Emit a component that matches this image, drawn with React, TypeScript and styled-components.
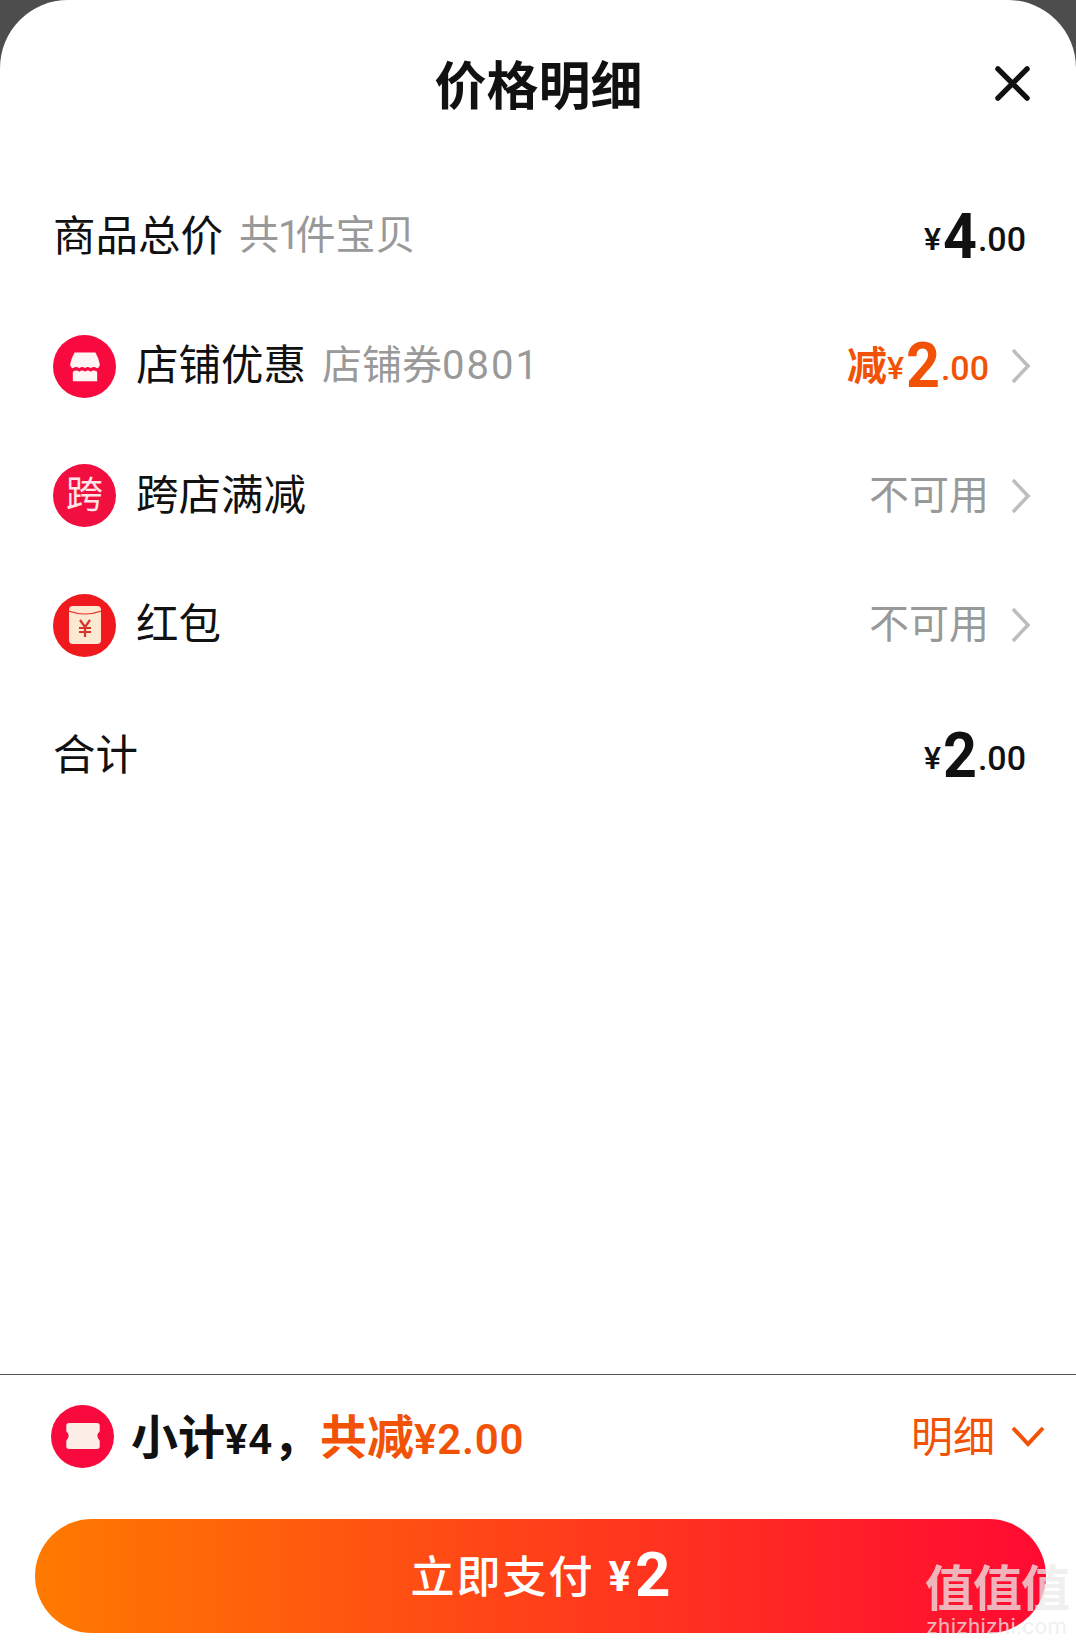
import React from 'react'
import styled, { createGlobalStyle } from 'styled-components'

const FONT = `Roboto, "Noto Sans CJK SC", sans-serif`
const ORANGE = '#f25206'
const INK = '#111111'
const GREY = '#999999'

const GlobalStyle = createGlobalStyle`
  html, body {
    margin: 0;
    padding: 0;
    background: #4d4d4d;
    font-family: ${FONT};
  }
`

const Sheet = styled.div`
  position: relative;
  width: 1076px;
  height: 1645px;
  display: flex;
  flex-direction: column;
  background: #fff;
  border-radius: 68px 68px 0 0;
  overflow: hidden;
`
const Header = styled.div`
  height: 172px;
  flex: none;
  display: grid;
  grid-template-columns: 1fr auto 1fr;
  padding: 0 46px 0 47px;
  box-sizing: border-box;
  align-items: start;
`
const Title = styled.div`
  grid-column: 2;
  font-size: 52px;
  line-height: 60px;
  margin-top: 58px;
  font-weight: 700;
  color: ${INK};
`
const CloseIcon = styled.svg`
  grid-column: 3;
  justify-self: end;
  width: 35px;
  height: 35px;
  margin-top: 66px;
`
const List = styled.div`
  flex: 1;
  display: flex;
  flex-direction: column;
  padding: 0 45px 0 53px;
`
const Row = styled.div`
  height: 129.5px;
  display: flex;
  align-items: center;
`
const TotalRow = styled(Row)`
  margin-top: 1px;
`
const Label = styled.span<{ $indent?: boolean }>`
  font-size: 42.5px;
  color: ${INK};
  margin-left: ${(p) => (p.$indent ? '20px' : '0')};
  margin-bottom: 9px;
  white-space: nowrap;
`
const Sub = styled.span`
  font-size: 40px;
  color: ${GREY};
  margin-left: 16px;
  margin-bottom: 9px;
  white-space: nowrap;
`
const NarrowOne = styled.span`
  letter-spacing: -5px;
  margin-left: -1px;
`
const Code = styled.span`
  letter-spacing: 2px;
`
const Right = styled.div`
  margin-left: auto;
  display: flex;
  align-items: center;
`
const Price = styled.div<{ $color: string; $trim?: boolean }>`
  display: flex;
  align-items: center;
  color: ${(p) => p.$color};
  margin-right: ${(p) => (p.$trim ? '5px' : '0')};
  white-space: nowrap;
`
const Prefix = styled.span`
  font-size: 40px;
  font-weight: 700;
  margin-bottom: 6px;
`
const Yen = styled.span`
  font-size: 32px;
  font-weight: 500;
  margin-top: 4px;
  margin-right: 1px;
`
const BigNum = styled.span`
  font-size: 63px;
  font-weight: 700;
  line-height: 70px;
  display: inline-block;
  width: 33px;
  text-align: center;
  transform: scaleX(0.94);
`
const Cents = styled.span`
  font-size: 34px;
  font-weight: 500;
  margin-left: 3px;
  margin-top: 4px;
`
const Unavailable = styled.span`
  font-size: 40px;
  color: ${GREY};
  margin-bottom: 8px;
`
const Arrow = styled.svg`
  width: 20px;
  height: 36px;
  margin-left: 22px;
`
const Badge = styled.div<{ $bg: string }>`
  width: 63px;
  height: 63px;
  flex: none;
  border-radius: 50%;
  background: ${(p) => p.$bg};
  display: flex;
  align-items: center;
  justify-content: center;
  color: #ffe3e6;
  font-size: 37px;
  line-height: 63px;
`
const Footer = styled.div`
  flex: none;
  height: 271px;
  box-sizing: border-box;
  border-top: 1px solid #555;
  padding: 0 30px 12px 35px;
  display: flex;
  flex-direction: column;
`
const Summary = styled.div`
  height: 122px;
  padding: 0 1px 0 16px;
  display: flex;
  align-items: center;
  flex: none;
`
const Subtotal = styled.span<{ $color: string; $gap: string }>`
  font-size: 47px;
  font-weight: 700;
  color: ${(p) => p.$color};
  margin-left: ${(p) => p.$gap};
  margin-bottom: 5px;
  white-space: nowrap;
`
const Figures = styled.span`
  font-size: 42px;
  font-weight: 600;
  letter-spacing: 0.8px;
`
const Detail = styled.span`
  margin-left: auto;
  margin-bottom: 5px;
  font-size: 42px;
  color: ${ORANGE};
`
const Caret = styled.svg`
  width: 34px;
  height: 22px;
  margin-left: 16px;
`
const PayButton = styled.div`
  height: 115px;
  width: 1011px;
  margin-top: 22px;
  border-radius: 58px;
  background: linear-gradient(90deg, #ff7a00 0%, #ff3a1c 55%, #ff0a32 100%);
  color: #fff;
  display: flex;
  align-items: center;
  justify-content: center;
  box-sizing: border-box;
`
const PayLabel = styled.span`
  font-size: 44px;
  font-weight: 500;
  letter-spacing: 2px;
  margin-bottom: 4px;
`
const PayYen = styled.span`
  font-size: 42px;
  font-weight: 700;
  margin-left: 14px;
`
const PayNum = styled.span`
  font-size: 62px;
  font-weight: 700;
  margin-left: 4px;
  margin-bottom: 4px;
`
const Watermark = styled.div`
  position: absolute;
  right: 6px;
  bottom: 7px;
  width: 146px;
  display: flex;
  flex-direction: column;
  align-items: center;
  color: rgba(235, 235, 235, 0.75);
  pointer-events: none;
`
const MarkGlyphs = styled.div`
  font-size: 49px;
  line-height: 52px;
  font-weight: 700;
  letter-spacing: -1px;
  white-space: nowrap;
`
const MarkUrl = styled.div`
  font-size: 22px;
  line-height: 22px;
  letter-spacing: 0.5px;
  white-space: nowrap;
`

const Chevron = () => (
  <Arrow viewBox="0 0 20 36">
    <path d="M2 2 L17 18 L2 34" fill="none" stroke="#bdbdbd" strokeWidth="3.5" />
  </Arrow>
)

const ShopIcon = () => (
  <svg width="34" height="33" viewBox="0 0 38 38">
    <path d="M7 3 H31 Q35 10 36 16 Q36 20 33 21 Q29 18 25.5 21 Q22 18 19 21 Q16 18 12.5 21 Q9 18 5 21 Q2 20 2 16 Q3 10 7 3 Z" fill="#fff5f5" />
    <path d="M5 25 Q9 22 12.5 25 Q16 22 19 25 Q22 22 25.5 25 Q29 22 33 25 V36 H5 Z" fill="#fff5f5" />
  </svg>
)

const PacketIcon = () => (
  <svg width="32" height="38" viewBox="0 0 32 38">
    <rect x="0" y="0" width="32" height="38" rx="4" fill="#fde8d2" />
    <path d="M0 5 Q16 11 32 5" fill="none" stroke="#e2382e" strokeWidth="1.2" />
    <path d="M11 14 L16 21 L21 14 M10 22 H22 M10 26 H22 M16 21 V31" fill="none" stroke="#d8342c" strokeWidth="2.2" />
  </svg>
)

const TicketIcon = () => (
  <svg width="34" height="26" viewBox="0 0 36 28">
    <path d="M3 0 H33 Q36 0 36 3 V9 Q31 14 36 19 V25 Q36 28 33 28 H3 Q0 28 0 25 V19 Q5 14 0 9 V3 Q0 0 3 0 Z" fill="#fbeee6" />
  </svg>
)

type Amount = { prefix?: string; num: string; color: string; trim?: boolean }

const Money = ({ prefix, num, color, trim }: Amount) => (
  <Price $color={color} $trim={trim}>
    {prefix && <Prefix>{prefix}</Prefix>}
    <Yen>¥</Yen>
    <BigNum>{num}</BigNum>
    <Cents>.00</Cents>
  </Price>
)

export default function App() {
  return (
    <>
      <GlobalStyle />
      <Sheet>
        <Header>
          <Title>价格明细</Title>
          <CloseIcon viewBox="0 0 36 36">
            <path d="M3 3 L33 33 M33 3 L3 33" stroke="#111" strokeWidth="5.5" strokeLinecap="round" />
          </CloseIcon>
        </Header>
        <List>
          <Row>
            <Label>商品总价</Label>
            <Sub>共<NarrowOne>1</NarrowOne>件宝贝</Sub>
            <Right>
              <Money num="4" color={INK} trim />
            </Right>
          </Row>
          <Row>
            <Badge $bg="#f80a3e"><ShopIcon /></Badge>
            <Label $indent>店铺优惠</Label>
            <Sub>店铺券<Code>0801</Code></Sub>
            <Right>
              <Money prefix="减" num="2" color={ORANGE} />
              <Chevron />
            </Right>
          </Row>
          <Row>
            <Badge $bg="#f00f3f">跨</Badge>
            <Label $indent>跨店满减</Label>
            <Right>
              <Unavailable>不可用</Unavailable>
              <Chevron />
            </Right>
          </Row>
          <Row>
            <Badge $bg="#f01a1e"><PacketIcon /></Badge>
            <Label $indent>红包</Label>
            <Right>
              <Unavailable>不可用</Unavailable>
              <Chevron />
            </Right>
          </Row>
          <TotalRow>
            <Label>合计</Label>
            <Right>
              <Money num="2" color={INK} trim />
            </Right>
          </TotalRow>
        </List>
        <Footer>
          <Summary>
            <Badge $bg="#f80a3e"><TicketIcon /></Badge>
            <Subtotal $color={INK} $gap="17px">小计<Figures>¥4</Figures>，</Subtotal>
            <Subtotal $color={ORANGE} $gap="0">共减<Figures>¥2.00</Figures></Subtotal>
            <Detail>明细</Detail>
            <Caret viewBox="0 0 34 22">
              <path d="M2 3 L17 19 L32 3" fill="none" stroke={ORANGE} strokeWidth="4" />
            </Caret>
          </Summary>
          <PayButton>
            <PayLabel>立即支付</PayLabel>
            <PayYen>¥</PayYen>
            <PayNum>2</PayNum>
          </PayButton>
        </Footer>
        <Watermark>
          <MarkGlyphs>值值值</MarkGlyphs>
          <MarkUrl>zhizhizhi.com</MarkUrl>
        </Watermark>
      </Sheet>
    </>
  )
}
